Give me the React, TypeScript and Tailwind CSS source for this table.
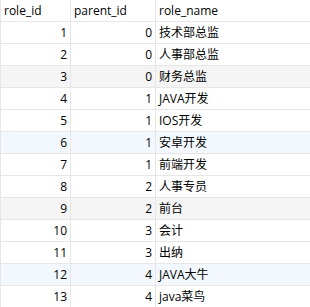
const rows = [
  { id: 1, parent: 0, name: "技术部总监" },
  { id: 2, parent: 0, name: "人事部总监" },
  { id: 3, parent: 0, name: "财务总监" },
  { id: 4, parent: 1, name: "JAVA开发" },
  { id: 5, parent: 1, name: "IOS开发" },
  { id: 6, parent: 1, name: "安卓开发" },
  { id: 7, parent: 1, name: "前端开发" },
  { id: 8, parent: 2, name: "人事专员" },
  { id: 9, parent: 2, name: "前台" },
  { id: 10, parent: 3, name: "会计" },
  { id: 11, parent: 3, name: "出纳" },
  { id: 12, parent: 4, name: "JAVA大牛" },
  { id: 13, parent: 4, name: "java菜鸟" },
];

// row tint as seen in the grid
const rowBg = (id: number) => {
  if (id === 3 || id === 9) return "bg-[#f5f5f5]";
  if (id === 6 || id === 12) return "bg-[#f2f8fd]";
  return "bg-white";
};

const cell = "h-[22px] border-b border-r border-[#e6e6e6] flex items-center px-[3px] whitespace-nowrap";

export default function App() {
  return (
    <div
      className="w-[310px] h-[307px] overflow-hidden bg-white text-[12px] text-black"
      style={{ fontFamily: '"Open Sans", "Noto Sans CJK SC", sans-serif' }}
    >
      <div className="grid grid-cols-[71px_85px_1fr]">
        <div className={`${cell} border-l bg-white`}>role_id</div>
        <div className={`${cell} bg-white`}>parent_id</div>
        <div className={`${cell} bg-white border-r-0`}>role_name</div>
        {rows.map((r) => (
          <div key={r.id} className="contents">
            <div className={`${cell} border-l justify-end ${rowBg(r.id)}`}>{r.id}</div>
            <div className={`${cell} justify-end ${rowBg(r.id)}`}>{r.parent}</div>
            <div className={`${cell} border-r-0 ${rowBg(r.id)}`}>{r.name}</div>
          </div>
        ))}
      </div>
    </div>
  );
}
